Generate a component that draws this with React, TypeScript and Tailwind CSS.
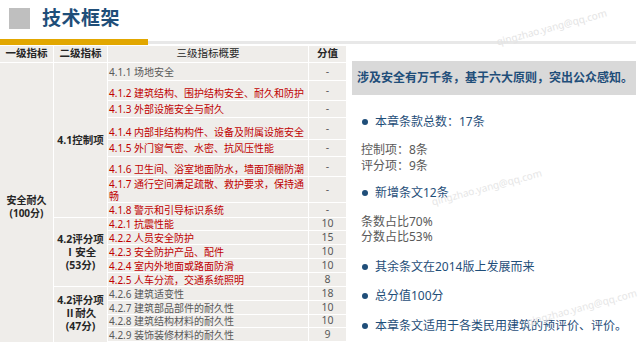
import React from 'react';

const FONT = { fontFamily: '"Noto Sans", "Noto Sans CJK SC", sans-serif' };

type Row = { t: string[]; s: string; h: string; red: boolean; end?: boolean };

const ROWS: Row[] = [
  { t: ['4.1.1 场地安全'], s: '-', h: 'h-[18px]', red: false },
  { t: ['4.1.2 建筑结构、围护结构安全、耐久和防护'], s: '-', h: 'h-[20px]', red: true, end: true },
  { t: ['4.1.3 外部设施安全与耐久'], s: '-', h: 'h-[17px]', red: true },
  { t: ['4.1.4 内部非结构构件、设备及附属设施安全'], s: '-', h: 'h-[22px]', red: true, end: true },
  { t: ['4.1.5 外门窗气密、水密、抗风压性能'], s: '-', h: 'h-[17px]', red: true },
  { t: ['4.1.6 卫生间、浴室地面防水，墙面顶棚防潮'], s: '-', h: 'h-[20px]', red: true, end: true },
  { t: ['4.1.7 通行空间满足疏散、救护要求，保持通', '畅'], s: '-', h: 'h-[26px]', red: true },
  { t: ['4.1.8 警示和引导标识系统'], s: '-', h: 'h-[15px]', red: true },
  { t: ['4.2.1 抗震性能'], s: '10', h: 'h-[13px]', red: true },
  { t: ['4.2.2 人员安全防护'], s: '15', h: 'h-[14px]', red: true },
  { t: ['4.2.3 安全防护产品、配件'], s: '10', h: 'h-[14px]', red: true },
  { t: ['4.2.4 室内外地面或路面防滑'], s: '10', h: 'h-[14px]', red: true },
  { t: ['4.2.5 人车分流，交通系统照明'], s: '8', h: 'h-[14px]', red: true },
  { t: ['4.2.6 建筑适变性'], s: '18', h: 'h-[14px]', red: false },
  { t: ['4.2.7 建筑部品部件的耐久性'], s: '10', h: 'h-[14px]', red: false },
  { t: ['4.2.8 建筑结构材料的耐久性'], s: '10', h: 'h-[13px]', red: false },
  { t: ['4.2.9 装饰装修材料的耐久性'], s: '9', h: 'h-[14px]', red: false },
];

function TableRow({ r }: { r: Row }) {
  return (
    <div className={`flex border-b border-white ${r.h}`}>
      <div className={`flex-1 flex pl-[1px] leading-[12px] text-[10px] ${r.end ? 'items-end pb-[1px]' : 'items-center'} ${r.red ? 'text-[#c00000]' : 'text-[#595959]'}`}>
        <div>{r.t.map((l, i) => <div key={i}>{l}</div>)}</div>
      </div>
      <div className="w-[38px] border-l border-white flex items-center justify-center text-[10.5px] text-[#595959]">{r.s}</div>
    </div>
  );
}

function Bullet({ children, className }: { children: React.ReactNode; className: string }) {
  return (
    <div className={`flex items-center pl-[10px] text-[12px] leading-[16px] text-[#1f4e79] ${className}`}>
      <span className="w-[6px] h-[6px] rounded-full bg-[#1f4e79] mr-[7px]" />
      {children}
    </div>
  );
}

export default function App() {
  return (
    <div className="relative w-[640px] h-[345px] bg-white overflow-hidden" style={FONT}>
      {/* Title */}
      <div className="h-[39px] flex items-center pl-[9px] pb-[2px]">
        <div className="w-[21px] h-[21px] bg-[#bfbfbf]" />
        <div className="ml-[12px] text-[19px] font-bold text-[#1f4e79] tracking-[0.5px]">技术框架</div>
      </div>
      <div className="flex items-center h-[6px]">
        <div className="w-[148px] h-[6px] bg-[#e2a700]" />
        <div className="w-[488px] h-[3px] bg-[#e8e8e8]" />
      </div>

      <div className="flex">
        {/* Table */}
        <div className="w-[346px] mt-[1px] bg-[#efedea] text-[#262626]">
          <div className="flex h-[17px] border-b border-white text-[10.5px] font-bold items-center">
            <div className="w-[54px] text-center border-r border-white h-full flex items-center justify-center">一级指标</div>
            <div className="w-[54px] text-center border-r border-white h-full flex items-center justify-center">二级指标</div>
            <div className="flex-1 text-center font-normal text-[10.5px]">三级指标概要</div>
            <div className="w-[38px] border-l border-white h-full flex items-center justify-center">分值</div>
          </div>
          <div className="flex">
            <div className="w-[54px] border-r border-white flex items-center justify-center text-center text-[10px] font-bold leading-[13px] pt-[8px]">
              <div>安全耐久<br />(100分)</div>
            </div>
            <div className="w-[54px] border-r border-white flex flex-col text-[10.5px] font-bold text-center leading-[13px]">
              <div className="h-[155px] border-b border-white flex items-center justify-center">4.1控制项</div>
              <div className="h-[69px] border-b border-white flex items-center justify-center">
                <div>4.2评分项<br />Ⅰ安全<br />(53分)</div>
              </div>
              <div className="flex-1 flex items-center justify-center pb-[2px]">
                <div>4.2评分项<br />Ⅱ耐久<br />(47分)</div>
              </div>
            </div>
            <div className="flex-1 flex flex-col">
              {ROWS.map((r, i) => <TableRow key={i} r={r} />)}
            </div>
          </div>
        </div>

        {/* Right panel */}
        <div className="flex-1 pl-[6px] pr-[4px]">
          <div className="mt-[16px] h-[34px] bg-[#d9d9d9] flex items-center pl-[5px] text-[12px] font-bold text-[#1f4e79] whitespace-nowrap">
            涉及安全有万千条，基于六大原则，突出公众感知。
          </div>
          <Bullet className="mt-[19px]">本章条款总数：17条</Bullet>
          <div className="mt-[12px] pl-[9px] text-[12px] leading-[16px] text-[#595959]">控制项：8条<br />评分项：9条</div>
          <Bullet className="mt-[11px]">新增条文12条</Bullet>
          <div className="mt-[13px] pl-[9px] text-[12px] leading-[15px] text-[#595959]">条数占比70%<br />分数占比53%</div>
          <Bullet className="mt-[15px]">其余条文在2014版上发展而来</Bullet>
          <Bullet className="mt-[13px]">总分值100分</Bullet>
          <Bullet className="mt-[14px] whitespace-nowrap">本章条文适用于各类民用建筑的预评价、评价。</Bullet>
        </div>
      </div>

      {/* Watermarks */}
      <div className="absolute left-[495px] top-[20px] -rotate-[15deg] text-[10px] text-[#e4e4e4] pointer-events-none">qingzhao.yang@qq.com</div>
      <div className="absolute left-[430px] top-[180px] -rotate-[15deg] text-[10px] text-[#e6e6e6] pointer-events-none">qingzhao.yang@qq.com</div>
      <div className="absolute left-[525px] top-[300px] -rotate-[15deg] text-[10px] text-[#e6e6e6] pointer-events-none">qingzhao.yang@qq.com</div>
    </div>
  );
}
